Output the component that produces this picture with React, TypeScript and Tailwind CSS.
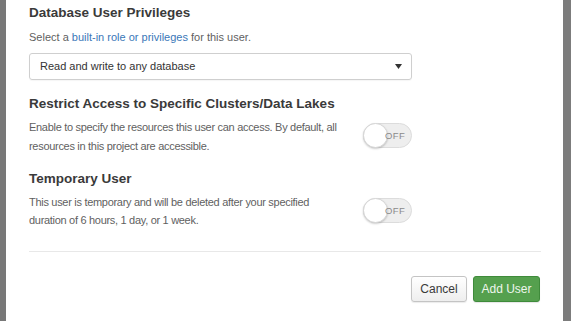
import React from "react";

function Toggle() {
  return (
    <div className="relative w-[49px] h-[25px] rounded-full bg-[#eeeeee] border border-[#dcdcdc] shrink-0">
      <div className="absolute left-[-1px] top-[-1px] w-[25px] h-[25px] rounded-full bg-white border border-[#d6d6d6] shadow-[0_1px_2px_rgba(0,0,0,0.2)]" />
      <span className="absolute right-[6px] top-[6px] text-[9.5px] leading-[11px] text-[#8a8a8a] tracking-[0.3px]">OFF</span>
    </div>
  );
}

export default function App() {
  return (
    <div
      className="flex w-[571px] h-[321px] overflow-hidden"
      style={{ fontFamily: '"Liberation Sans", Arial, sans-serif' }}
    >
      <div className="w-[6px] shrink-0 bg-[#787878]" />
      <div className="flex-1 bg-white pl-[23px] pr-[22px] flex flex-col">
        <div className="mt-[3px] text-[13.5px] leading-[20px] font-bold text-[#3a3a3a]">Database User Privileges</div>
        <div className="mt-[6px] text-[11px] leading-[16px] text-[#5f5f5f]">
          Select a <span className="text-[#3a77b8]">built-in role or privileges</span> for this user.
        </div>
        <div className="mt-[8px] w-[383px] h-[27px] border border-[#cfcfcf] rounded-[3px] flex items-center pl-[10px] pr-[9px] shadow-[0_1px_1px_rgba(0,0,0,0.04)]">
          <span className="text-[11px] text-[#333]">Read and write to any database</span>
          <svg className="ml-auto" width="7" height="5" viewBox="0 0 7 5">
            <path d="M0 0 L7 0 L3.5 5 Z" fill="#333" />
          </svg>
        </div>
        <div className="mt-[14px] text-[13.5px] leading-[20px] font-bold text-[#3a3a3a]">Restrict Access to Specific Clusters/Data Lakes</div>
        <div className="mt-[4px] w-[383px] flex items-start">
          <div className="w-[330px] text-[11px] leading-[19px] tracking-[-0.3px] text-[#5f5f5f]">
            Enable to specify the resources this user can access. By default, all resources in this project are accessible.
          </div>
          <div className="ml-auto mt-[5px]">
            <Toggle />
          </div>
        </div>
        <div className="mt-[13px] text-[13.5px] leading-[20px] font-bold text-[#3a3a3a]">Temporary User</div>
        <div className="mt-[4px] w-[383px] flex items-start">
          <div className="w-[310px] text-[11px] leading-[18px] tracking-[-0.3px] text-[#5f5f5f]">
            This user is temporary and will be deleted after your specified duration of 6 hours, 1 day, or 1 week.
          </div>
          <div className="ml-auto mt-[5px]">
            <Toggle />
          </div>
        </div>
        <div className="mt-[22px] h-px bg-[#e8e8e8]" />
        <div className="mt-[24px] flex justify-end gap-[6px] pr-[1px]">
          <button className="w-[56px] h-[26px] rounded-[3px] border border-[#c4c4c4] bg-gradient-to-b from-white to-[#eeeeee] text-[12px] text-[#3a3a3a] shadow-[0_1px_1px_rgba(0,0,0,0.08)]">
            Cancel
          </button>
          <button className="w-[67px] h-[26px] rounded-[3px] border border-[#3f8b3b] bg-[#55a04e] text-[12px] text-[#eef6ec] shadow-[0_1px_1px_rgba(0,0,0,0.1)]">
            Add User
          </button>
        </div>
      </div>
      <div className="w-[8px] shrink-0 bg-[#7c7c7c]" />
    </div>
  );
}
